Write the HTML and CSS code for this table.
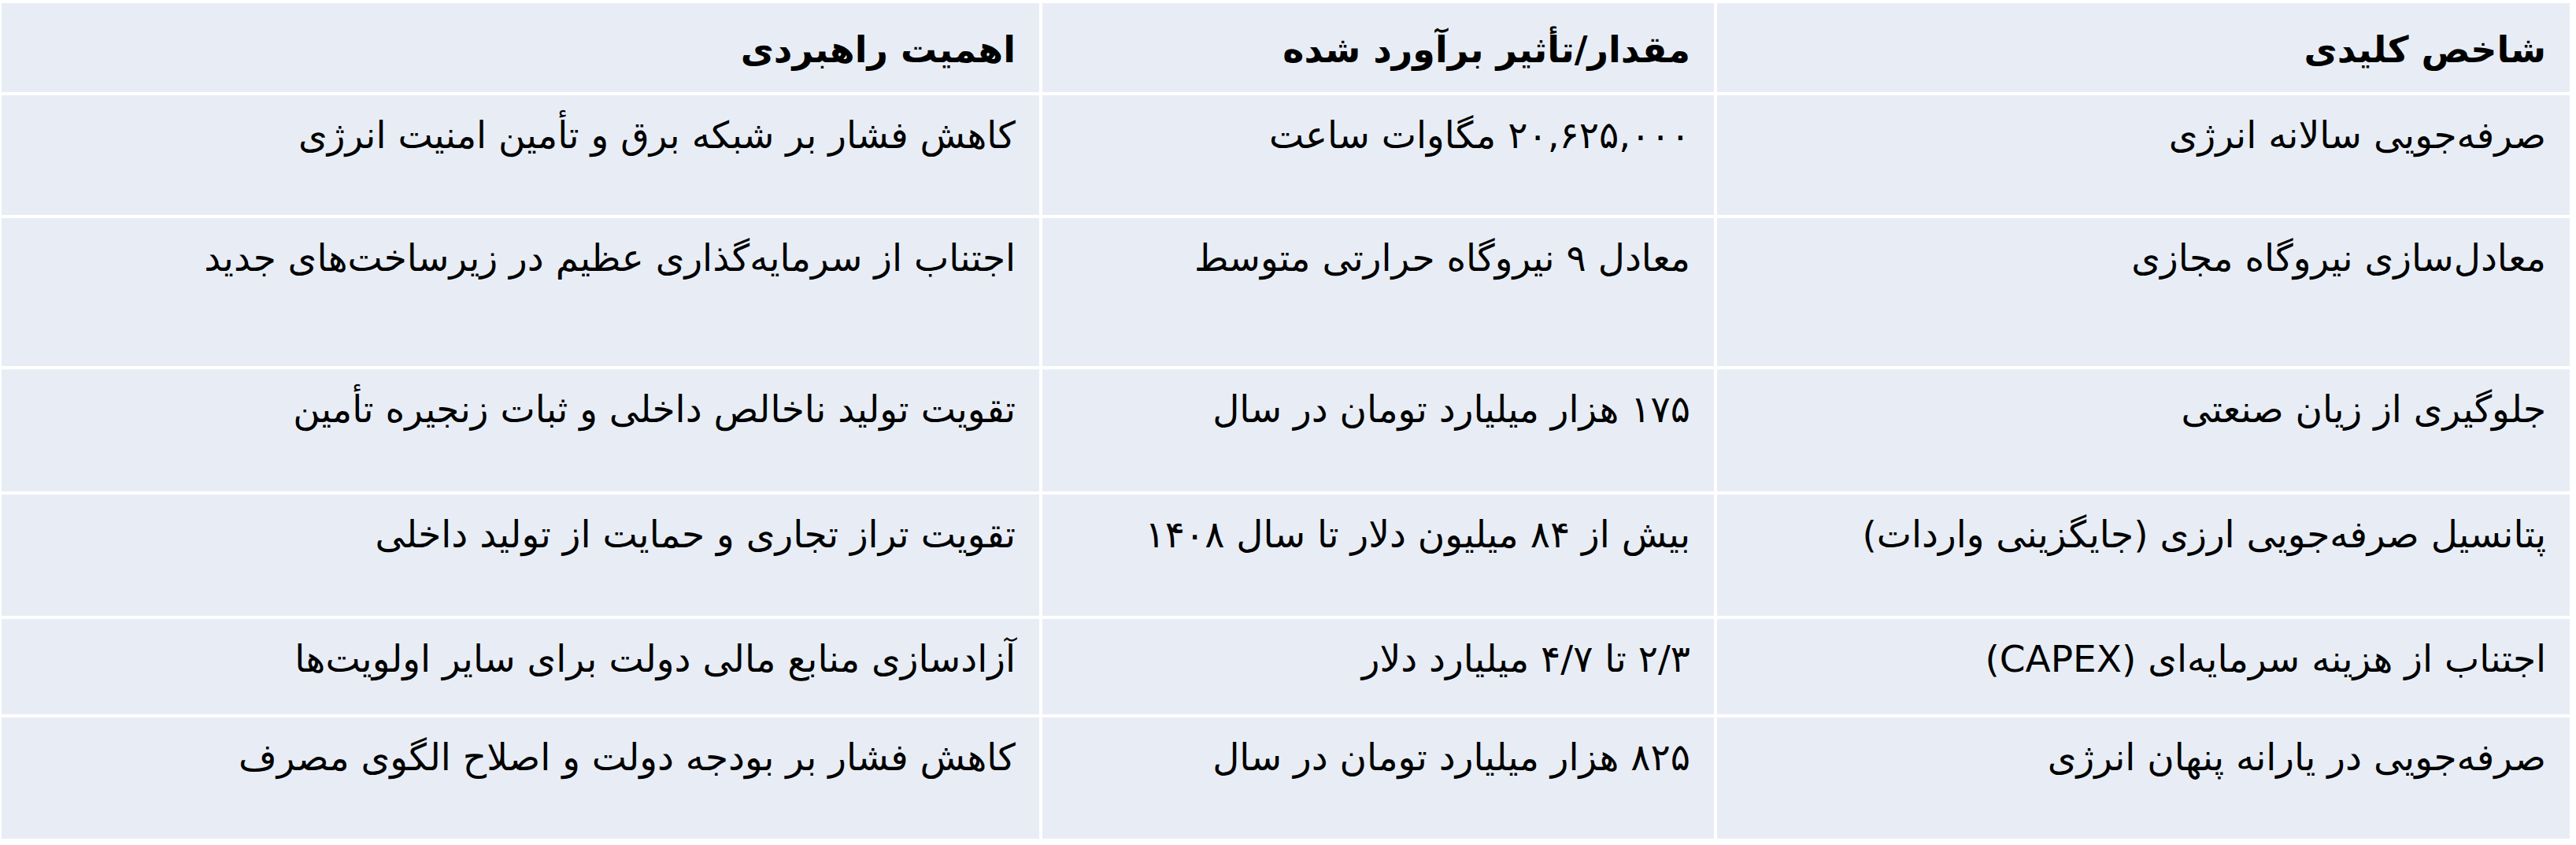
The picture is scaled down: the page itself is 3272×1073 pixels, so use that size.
FILE: index.html
```html
<!DOCTYPE html>
<html lang="fa" dir="rtl">
<head>
<meta charset="utf-8">
<title>شاخص‌های کلیدی</title>
<link rel="stylesheet" href="styles.css">
</head>
<body>
<div class="table">
  <div class="cell head">شاخص کلیدی</div>
  <div class="cell head">مقدار/تأثیر برآورد شده</div>
  <div class="cell head">اهمیت راهبردی</div>

  <div class="cell">صرفه‌جویی سالانه انرژی</div>
  <div class="cell">۲۰,۶۲۵,۰۰۰ مگاوات ساعت</div>
  <div class="cell">کاهش فشار بر شبکه برق و تأمین امنیت انرژی</div>

  <div class="cell">معادل‌سازی نیروگاه مجازی</div>
  <div class="cell">معادل ۹ نیروگاه حرارتی متوسط</div>
  <div class="cell">اجتناب از سرمایه‌گذاری عظیم در زیرساخت‌های جدید</div>

  <div class="cell">جلوگیری از زیان صنعتی</div>
  <div class="cell">۱۷۵ هزار میلیارد تومان در سال</div>
  <div class="cell">تقویت تولید ناخالص داخلی و ثبات زنجیره تأمین</div>

  <div class="cell">پتانسیل صرفه‌جویی ارزی (جایگزینی واردات)</div>
  <div class="cell">بیش از ۸۴ میلیون دلار تا سال ۱۴۰۸</div>
  <div class="cell">تقویت تراز تجاری و حمایت از تولید داخلی</div>

  <div class="cell">اجتناب از هزینه سرمایه‌ای (CAPEX)</div>
  <div class="cell">۲/۳ تا ۴/۷ میلیارد دلار</div>
  <div class="cell">آزادسازی منابع مالی دولت برای سایر اولویت‌ها</div>

  <div class="cell">صرفه‌جویی در یارانه پنهان انرژی</div>
  <div class="cell">۸۲۵ هزار میلیارد تومان در سال</div>
  <div class="cell">کاهش فشار بر بودجه دولت و اصلاح الگوی مصرف</div>
</div>
</body>
</html>
```

FILE: styles.css
```css
html, body {
  margin: 0;
  padding: 0;
  background: #ffffff;
}

body {
  font-family: "DejaVu Sans", "Noto Sans", sans-serif;
  color: #000000;
}

.table {
  display: grid;
  grid-template-columns: 1083px 853px 1318px;
  grid-template-rows: 113px 152px 188px 155px 154px 121px 154px;
  gap: 4px;
  padding: 4px 8px 8px 2px;
  width: max-content;
}

.cell {
  background: #e8edf5;
  padding: 21px 30px 0 30px;
  font-size: 47px;
  line-height: 60px;
  text-align: right;
  white-space: nowrap;
}

.head {
  font-weight: bold;
  font-size: 46px;
  padding-top: 29px;
}
```
